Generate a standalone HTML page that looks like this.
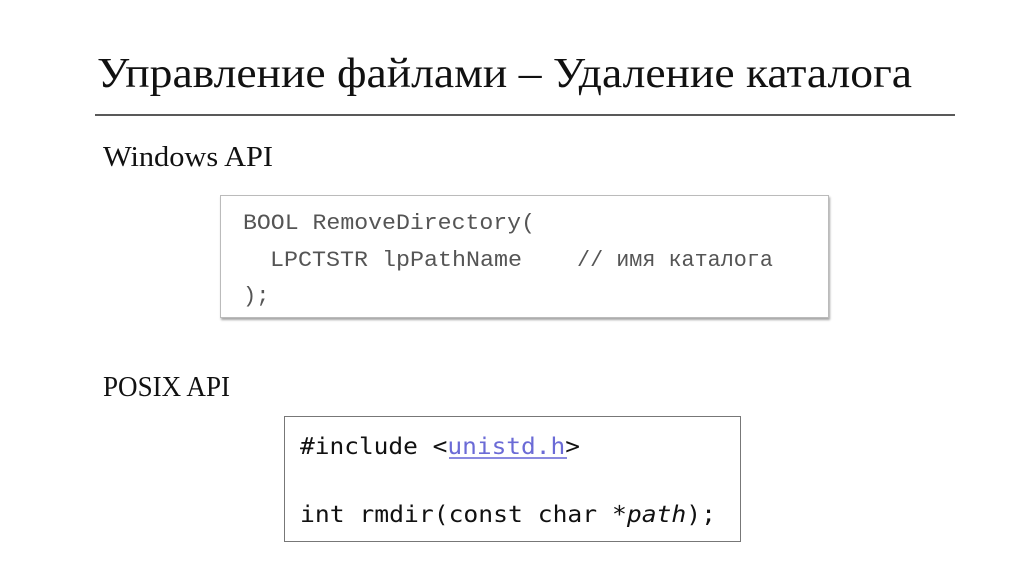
<!DOCTYPE html>
<html><head><meta charset="utf-8"><style>
html,body{margin:0;padding:0;background:#fff;width:1024px;height:574px;overflow:hidden;position:relative}
.box1{position:absolute;left:220px;top:195px;width:607px;height:121px;border:1px solid #bbb;box-shadow:1px 2px 2px rgba(0,0,0,.35);background:#fff}
.box2{position:absolute;left:284px;top:416px;width:455px;height:124px;border:1px solid #777;background:#fff}
</style></head><body>
<svg width="1024" height="574" style="position:absolute;left:0;top:0">
<text x="97" y="87" font-family="Liberation Serif, serif" font-size="42" fill="#111" textLength="815" lengthAdjust="spacingAndGlyphs">Управление файлами – Удаление каталога</text>
<line x1="95" y1="115" x2="955" y2="115" stroke="#222" stroke-width="1.5"/>
<text x="103" y="166" font-family="Liberation Serif, serif" font-size="28" fill="#111" textLength="170" lengthAdjust="spacingAndGlyphs">Windows API</text>
<text x="103" y="396" font-family="Liberation Serif, serif" font-size="28" fill="#111" textLength="127" lengthAdjust="spacingAndGlyphs">POSIX API</text>
</svg>
<div class="box1"></div>
<div class="box2"></div>
<svg width="1024" height="574" style="position:absolute;left:0;top:0">
<g font-family="Liberation Mono, monospace" font-size="22" fill="#555">
<text x="243" y="229" textLength="292" lengthAdjust="spacingAndGlyphs">BOOL  RemoveDirectory(</text>
<text x="270" y="266" textLength="252" lengthAdjust="spacingAndGlyphs">LPCTSTR  lpPathName</text>
<text x="577" y="266" textLength="196" lengthAdjust="spacingAndGlyphs">// имя каталога</text>
<text x="243" y="302">);</text>
</g>
<g font-family="DejaVu Sans Mono, monospace" font-size="23" fill="#111">
<text x="300" y="454" textLength="280" lengthAdjust="spacingAndGlyphs">#include &lt;<tspan fill="#6b6bd6">unistd.h</tspan>&gt;</text>
<line x1="449" y1="458" x2="567" y2="458" stroke="#8a8ae0" stroke-width="2"/>
<text x="300" y="522" textLength="416" lengthAdjust="spacingAndGlyphs">int rmdir(const char *<tspan font-style="italic">path</tspan>);</text>
</g>
</svg>
</body></html>
